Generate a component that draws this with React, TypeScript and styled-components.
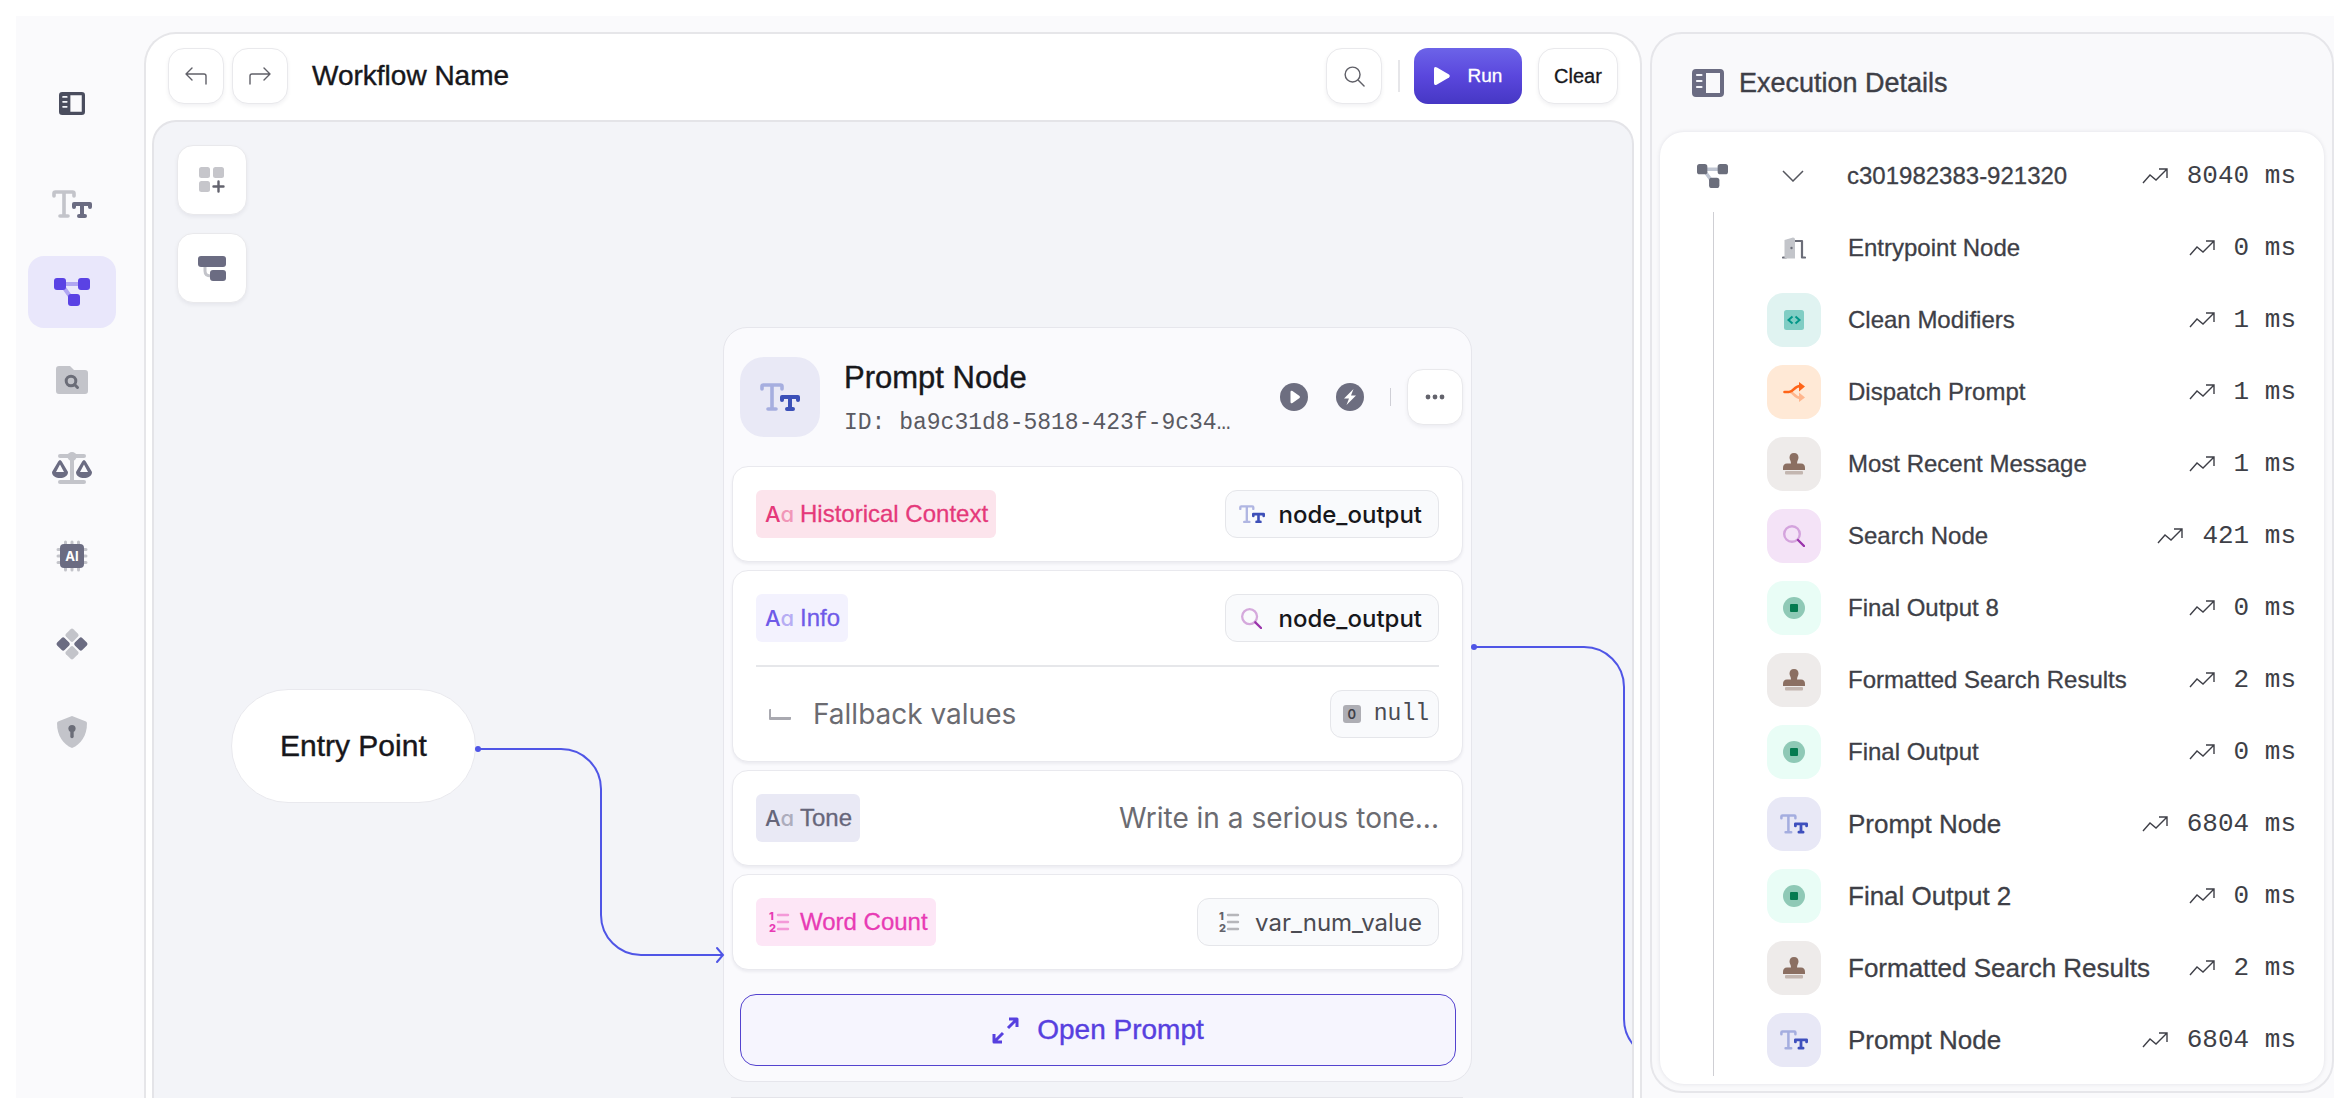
import React from "react";
import styled, { createGlobalStyle } from "styled-components";

const GROTESK = `"Liberation Sans", Arial, Helvetica, sans-serif`;
const INTER = `Inter, "Liberation Sans", sans-serif`;
const MONO = `"Liberation Mono", "Courier New", monospace`;

const Global = createGlobalStyle`
  *, *::before, *::after { box-sizing: border-box; }
  body { margin: 0; background: #fff; font-family: ${GROTESK}; color: #17171b; }
  button { font: inherit; color: inherit; cursor: pointer; margin: 0; padding: 0; }
  h1, h2, h3, p, ul { margin: 0; padding: 0; }
  ul { list-style: none; }
  svg { display: block; flex: none; }
`;

const Shell = styled.div`
  height: 100vh;
  overflow: hidden;
  padding: 16px 16px 0;
  background: #fff;
`;

const Frame = styled.div`
  display: flex;
  height: 100%;
  background: #fafafc;
`;

/* ---------- sidebar ---------- */

const Sidebar = styled.nav`
  flex: none;
  width: 128px;
  padding: 51px 12px 0;
  display: flex;
  flex-direction: column;
  gap: 16px;
`;

const NavButton = styled.button<{ $active?: boolean; $first?: boolean }>`
  width: 88px;
  height: 72px;
  margin-bottom: ${(p) => (p.$first ? 13 : 0)}px;
  border: 0;
  border-radius: 16px;
  display: flex;
  align-items: center;
  justify-content: center;
  background: ${(p) => (p.$active ? "#e9e7fb" : "transparent")};
`;

/* ---------- workflow panel ---------- */

const Workspace = styled.main`
  flex: 1;
  min-width: 0;
  margin: 16px 8px 0 0;
  display: flex;
  flex-direction: column;
  border: 2px solid #e6e6e9;
  border-bottom: 0;
  border-radius: 32px 32px 0 0;
  background: #fff;
`;

const Toolbar = styled.header`
  height: 86px;
  flex: none;
  display: flex;
  align-items: center;
  padding: 0 22px 2px;
`;

const Group = styled.div`
  display: flex;
  gap: 8px;
`;

const Heading = styled.h1`
  flex: 1;
  margin-left: 24px;
  font-size: 28px;
  line-height: 36px;
  font-weight: 400;
  -webkit-text-stroke: 0.4px currentColor;
`;

const ToolButton = styled.button<{ $size?: number }>`
  width: ${(p) => p.$size ?? 56}px;
  height: ${(p) => p.$size ?? 56}px;
  flex: none;
  display: flex;
  align-items: center;
  justify-content: center;
  border: 1px solid #e9e9ec;
  border-radius: 16px;
  background: #fff;
  box-shadow: 0 2px 4px rgba(20, 20, 50, 0.06);
`;

const Divider = styled.span<{ $tall?: boolean }>`
  width: ${(p) => (p.$tall ? 2 : 1)}px;
  height: ${(p) => (p.$tall ? 32 : 18)}px;
  margin: 0 14px 0 16px;
  background: ${(p) => (p.$tall ? "#e6e6e9" : "#cfcfd6")};
`;

const RunButton = styled.button`
  width: 108px;
  height: 56px;
  display: flex;
  align-items: center;
  justify-content: center;
  gap: 18px;
  border: 0;
  border-radius: 14px;
  font-size: 19px;
  color: #fff;
  background: linear-gradient(#6c63e8, #5a47dd 50%, #4637c4);
  -webkit-text-stroke: 0.3px currentColor;
`;

const ClearButton = styled(ToolButton)`
  width: 80px;
  margin-left: 16px;
  font-size: 20px;
  -webkit-text-stroke: 0.3px currentColor;
`;

const Canvas = styled.section`
  position: relative;
  flex: 1;
  min-height: 0;
  margin: 0 6px;
  overflow: hidden;
  border: 2px solid #e4e4e8;
  border-bottom: 0;
  border-radius: 24px 24px 0 0;
  background: #f3f4f8;
`;

const CanvasTools = styled.div`
  padding: 23px;
  display: flex;
  flex-direction: column;
  gap: 18px;
`;

const Edges = styled.svg`
  position: absolute;
  inset: 0;
  width: 100%;
  height: 100%;
  pointer-events: none;
`;

/* Nodes sit at free coordinates on the canvas. */
const EntryNode = styled.div`
  position: absolute;
  left: 77px;
  top: 567px;
  padding: 0 48px;
  height: 114px;
  display: flex;
  align-items: center;
  border: 1px solid #e9e9ee;
  border-radius: 57px;
  background: #fff;
  font-size: 30px;
  -webkit-text-stroke: 0.4px currentColor;
`;

const PromptNode = styled.article`
  position: absolute;
  left: 569px;
  top: 205px;
  width: 749px;
  padding: 0 8px 15px;
  border: 1px solid #e6e6ec;
  border-radius: 24px;
  background: #fafafd;
`;

const NextNode = styled.div`
  position: absolute;
  left: 577px;
  top: 975px;
  width: 732px;
  height: 60px;
  border-top: 2px solid #e4e4e9;
`;

const NodeHeader = styled.header`
  height: 138px;
  padding: 0 0 0 8px;
  display: flex;
  align-items: center;
`;

const NodeTile = styled.span`
  width: 80px;
  height: 80px;
  display: flex;
  align-items: center;
  justify-content: center;
  border-radius: 24px;
  background: #e9e9f6;
`;

const NodeTitles = styled.div`
  flex: 1;
  min-width: 0;
  margin-left: 24px;
  padding-top: 10px;
`;

const NodeTitle = styled.h2`
  font-size: 31px;
  line-height: 42px;
  font-weight: 400;
  -webkit-text-stroke: 0.4px currentColor;
`;

const NodeId = styled.p`
  font-family: ${MONO};
  font-size: 23px;
  line-height: 48px;
  color: #5a5a62;
`;

const RoundButton = styled.button`
  width: 28px;
  height: 28px;
  margin-left: 28px;
  border: 0;
  border-radius: 50%;
  background: #6d6e80;
`;

const HeaderRule = styled(Divider)`
  margin: 0 16px 0 26px;
`;

const Stack = styled.div`
  display: flex;
  flex-direction: column;
  gap: 8px;
`;

const Card = styled.div`
  padding: 0 23px;
  border: 1px solid #e9e9ee;
  border-radius: 16px;
  background: #fff;
  box-shadow: 0 2px 3px rgba(20, 20, 50, 0.06);
`;

const CardRow = styled.div<{ $ruled?: boolean }>`
  height: ${(p) => (p.$ruled ? 96 : 94)}px;
  display: flex;
  align-items: center;
  justify-content: space-between;
  border-top: ${(p) => (p.$ruled ? "2px solid #e6e7ea" : "0")};
`;

const Chip = styled.span<{ $bg: string; $fg: string }>`
  height: 48px;
  padding: 0 8px 0 9px;
  display: flex;
  align-items: center;
  gap: 8px;
  border-radius: 6px;
  font-size: 24px;
  color: ${(p) => p.$fg};
  background: ${(p) => p.$bg};
  -webkit-text-stroke: 0.3px currentColor;
`;

const IconCell = styled.span`
  width: 27px;
  display: flex;
  align-items: center;
  justify-content: center;
`;

const LetterIcon = styled.span`
  width: 27px;
  font-family: ${INTER};
  font-size: 22px;
  font-weight: 500;
  font-feature-settings: "cv11";
  -webkit-text-stroke: 0;
`;

const Faded = styled.span`
  opacity: 0.45;
`;

const Pill = styled.span<{ $soft?: boolean; $mono?: boolean }>`
  height: 48px;
  padding: ${(p) => (p.$mono ? "0 9px 0 12px" : "0 16px 0 12px")};
  display: flex;
  align-items: center;
  gap: 13px;
  border: 1px solid #e5e6ea;
  border-radius: 12px;
  background: #f9fafc;
  font-family: ${(p) => (p.$mono ? MONO : INTER)};
  font-size: ${(p) => (p.$mono ? 23 : 24)}px;
  font-weight: ${(p) => (p.$mono || p.$soft ? 400 : 500)};
  color: ${(p) => (p.$mono || p.$soft ? "#4b4b52" : "#17171b")};
`;

const VariablePill = styled(Pill)`
  padding-left: 17px;
`;

const ZeroBadge = styled.span`
  width: 18px;
  height: 18px;
  border-radius: 3px;
  background: #aeaeb4;
  color: #3f4048;
  font: 600 13px/18px ${INTER};
  text-align: center;
`;

const Muted = styled.span`
  display: flex;
  align-items: center;
  gap: 22px;
  font-family: ${INTER};
  font-size: 28px;
  color: #6b6b71;
`;

const Elbow = styled.i`
  width: 22px;
  height: 11px;
  margin-left: 13px;
  border: solid #a9a9b0;
  border-width: 0 0 3px 2px;
  border-radius: 1px;
`;

const OpenButton = styled.button`
  display: flex;
  align-items: center;
  justify-content: center;
  gap: 18px;
  width: calc(100% - 15px);
  height: 72px;
  margin: 24px 7px 0 8px;
  border: 1px solid #5443cf;
  border-radius: 16px;
  background: #f6f5fe;
  color: #5740df;
  font-size: 28px;
  -webkit-text-stroke: 0.4px currentColor;
`;

/* ---------- execution panel ---------- */

const Execution = styled.aside`
  flex: none;
  width: 684px;
  align-self: flex-start;
  margin-top: 16px;
  padding: 0 8px 7px;
  border: 2px solid #e6e6ea;
  border-radius: 32px;
  background: #f9f9fb;
`;

const ExecHeader = styled.header`
  height: 98px;
  padding: 0 0 0 32px;
  display: flex;
  align-items: center;
  gap: 15px;
  color: #3e3f47;
`;

const ExecTitle = styled.h2`
  font-size: 27px;
  line-height: 36px;
  font-weight: 400;
  -webkit-text-stroke: 0.4px currentColor;
`;

const ExecCard = styled.div`
  padding: 8px 28px 8px 37px;
  border-radius: 24px;
  background: #fff;
  box-shadow: 0 0 4px rgba(20, 20, 50, 0.1);
  color: #3e3f47;
`;

const Row = styled.div`
  height: 72px;
  display: flex;
  align-items: center;
`;

const Steps = styled.ul`
  margin-left: 16px;
  padding-left: 53px;
  border-left: 1px solid #cfcfd4;
`;

const Tile = styled.span<{ $bg?: string }>`
  width: 54px;
  height: 54px;
  display: flex;
  align-items: center;
  justify-content: center;
  border-radius: 16px;
  background: ${(p) => p.$bg ?? "transparent"};
`;

const Toggle = styled.button`
  width: 54px;
  height: 54px;
  margin-left: 38px;
  display: flex;
  align-items: center;
  justify-content: center;
  border: 0;
  background: none;
`;

const Label = styled.span<{ $large?: boolean }>`
  flex: 1;
  margin-left: 27px;
  white-space: nowrap;
  font-size: ${(p) => (p.$large ? 26 : 24)}px;
  line-height: 32px;
  -webkit-text-stroke: 0.3px currentColor;
`;

const Duration = styled.span`
  display: flex;
  align-items: center;
  gap: 19px;
  white-space: pre;
  font-family: ${MONO};
  font-size: 26px;
  line-height: 32px;
`;

/* ---------- icons ---------- */

const DARK = "#6b6c82";
const PALE = "#c3c4ca";

const PanelIcon = ({ w, h, color }: { w: number; h: number; color: string }) => (
  <svg width={w} height={h} viewBox="0 0 32 28" preserveAspectRatio="none" fill="none">
    <path fill={color} fillRule="evenodd" d="M4 0h24a4 4 0 0 1 4 4v20a4 4 0 0 1-4 4H4a4 4 0 0 1-4-4V4a4 4 0 0 1 4-4Zm10 4v20h14V4Z" />
    <path stroke="#f4f5fa" strokeWidth="2.2" strokeLinecap="round" d="M5 6h4.500M5 12h4.500M5 18h4.500" />
  </svg>
);

const TypeIcon = ({ w, a, b }: { w: number; a: string; b: string }) => (
  <svg width={w} height={(w * 28) / 40} viewBox="0 0 40 28" fill="none" strokeLinecap="round" strokeLinejoin="round">
    <path stroke={a} strokeWidth="3.600" d="M2 6V3.500Q2 2 3.500 2h17Q22 2 22 3.500V6M12 2v24M8 26h8" />
    <path stroke={b} strokeWidth="4" d="M22 17v-3h16v3M30 14v12M27 26h6" />
  </svg>
);

const NodesIcon = ({ w, color, link }: { w: number; color: string; link: string }) => (
  <svg width={w} height={(w * 28) / 36} viewBox="0 0 36 28" fill="none">
    <path stroke={link} strokeWidth="4" d="M8 6h18M8 7l10 14" />
    <g fill={color}>
      <rect width="12" height="12" rx="3" />
      <rect x="24" width="12" height="12" rx="3" />
      <rect x="14" y="16" width="12" height="12" rx="3" />
    </g>
  </svg>
);

const FolderIcon = () => (
  <svg width="32" height="28" viewBox="0 0 32 28" fill="none">
    <path fill={PALE} d="M3 0h11l4 4h11a3 3 0 0 1 3 3v18a3 3 0 0 1-3 3H3a3 3 0 0 1-3-3V3a3 3 0 0 1 3-3Z" />
    <circle cx="15" cy="15" r="4.800" stroke="#6b6d78" strokeWidth="3" />
    <path stroke="#6b6d78" strokeWidth="3" strokeLinecap="round" d="m18.500 18.500 3 3" />
  </svg>
);

const ScaleIcon = () => (
  <svg width="40" height="32" viewBox="0 0 40 32" fill="none">
    <path stroke={PALE} strokeWidth="4" strokeLinecap="round" d="M8 4h24M20 4v26M8 30h24" />
    <circle cx="20" cy="4.500" r="4.500" fill={PALE} />
    <g fill={DARK} fillRule="evenodd">
      <path d="M6.200 9.500q1.800-3 3.600 0L16 20c0 8-16 8-16 0ZM4 20h8L8 12.500Z" />
      <path d="M30.200 9.500q1.800-3 3.600 0L40 20c0 8-16 8-16 0ZM28 20h8l-4-7.500Z" />
    </g>
  </svg>
);

const ChipIcon = () => (
  <svg width="32" height="32" viewBox="0 0 32 32" fill="none">
    <path stroke={PALE} strokeWidth="3" strokeLinecap="round" d="M9.500 2v28M16 2v28M22.500 2v28M2 9.500h28M2 16h28M2 22.500h28" />
    <rect x="4" y="4" width="24" height="24" rx="4" fill={DARK} />
    <text x="16" y="21" textAnchor="middle" fontFamily="Inter, sans-serif" fontWeight="700" fontSize="13" fill="#fff">AI</text>
  </svg>
);

const DiamondsIcon = () => (
  <svg width="34" height="34" viewBox="0 0 34 34">
    <g transform="rotate(45 17 17)">
      <rect x="5.500" y="5.500" width="10.500" height="10.500" rx="2" fill={PALE} />
      <rect x="18" y="18" width="10.500" height="10.500" rx="2" fill={PALE} />
      <rect x="18" y="5.500" width="10.500" height="10.500" rx="2" fill={DARK} />
      <rect x="5.500" y="18" width="10.500" height="10.500" rx="2" fill={DARK} />
    </g>
  </svg>
);

const ShieldIcon = () => (
  <svg width="30" height="32" viewBox="0 0 30 32" fill="none">
    <path fill={PALE} d="M15 0 29 5.500q1 .5 1 2C30 19 24 28.500 15 32 6 28.500 0 19 0 7.500q0-1.500 1-2Z" />
    <circle cx="15" cy="12.500" r="3.600" fill="#6b6d78" />
    <path stroke="#6b6d78" strokeWidth="3.400" strokeLinecap="round" d="M15 13v7.500" />
  </svg>
);

const BackIcon = ({ flip }: { flip?: boolean }) => (
  <svg width="22" height="18" viewBox="0 0 22 18" fill="none" stroke="#606068" strokeWidth="1.400" strokeLinecap="round" strokeLinejoin="round">
    <path d={flip ? "M1 17V9q0-2 2-2h18M15 1l6 6-6 6" : "M21 17V9q0-2-2-2H1M7 1 1 7l6 6"} />
  </svg>
);

const SearchIcon = ({ size, ring, handle, weight }: { size: number; ring: string; handle: string; weight: number }) => (
  <svg width={size} height={size} viewBox="0 0 22 22" fill="none" strokeLinecap="round" strokeWidth={weight}>
    <circle cx="9" cy="9" r="7.800" stroke={ring} />
    <path stroke={handle} d="m15 15 6 6" />
  </svg>
);

const AddBlockIcon = () => (
  <svg width="26" height="26" viewBox="0 0 26 26" fill="none">
    <g fill="#c6c6cb">
      <rect width="11" height="11" rx="2.500" />
      <rect x="14" width="11" height="11" rx="2.500" />
      <rect y="14" width="11" height="11" rx="2.500" />
    </g>
    <path stroke="#63636e" strokeWidth="2.400" strokeLinecap="round" d="M19.500 14.500v10M14.500 19.500h10" />
  </svg>
);

const ArrangeIcon = () => (
  <svg width="28" height="25" viewBox="0 0 28 25" fill="none">
    <path stroke={PALE} strokeWidth="3" d="M7 10v5q0 5 6 5" />
    <rect width="28" height="11" rx="3" fill={DARK} />
    <rect x="12" y="14" width="16" height="11" rx="3" fill={DARK} />
  </svg>
);

const NumberedIcon = ({ color }: { color: string }) => (
  <svg width="22" height="22" viewBox="0 0 22 22" fill={color} overflow="visible">
    <g fontFamily="Inter, sans-serif" fontSize="11" fontWeight="800">
      <text x="1" y="9">1</text>
      <text x="1" y="21">2</text>
    </g>
    <path stroke={color} strokeOpacity=".45" strokeWidth="2.400" strokeLinecap="round" d="M10 4h10M10 11h10M10 18h10" />
  </svg>
);

const ExpandIcon = () => (
  <svg width="27" height="27" viewBox="0 0 27 27" fill="none" stroke="currentColor" strokeWidth="3" strokeLinejoin="round">
    <path d="m16 11 9-9M17 2h8v8M11 16l-9 9M2 17v8h8" />
  </svg>
);

const TrendIcon = () => (
  <svg width="26" height="16" viewBox="0 0 26 16" fill="none" stroke="#3e3f47" strokeWidth="1.400">
    <path d="m1 15 7-8 6 5L25 1M17 1h8v9" />
  </svg>
);

const DoorIcon = () => (
  <svg width="24" height="22" viewBox="0 0 24 22" fill="none">
    <path stroke="#6b6d78" strokeWidth="2.200" strokeLinecap="round" strokeLinejoin="round" d="M13 4h7v16.500h3M1 20.500h3" />
    <path fill="#c3c5ca" d="M2.500 3 11 .5q2 0 2 2V21.500H2.500Z" />
    <circle cx="9.500" cy="11" r="1.200" fill="#6b6d78" />
  </svg>
);

const CodeIcon = () => (
  <svg width="20" height="20" viewBox="0 0 20 20" fill="none">
    <rect width="20" height="20" rx="2.500" fill="#80cdc4" />
    <path stroke="#009688" strokeWidth="2" d="m8.500 6.500-4 3.500 4 3.500M11.500 6.500l4 3.500-4 3.500" />
  </svg>
);

const SplitIcon = () => (
  <svg width="22" height="20" viewBox="0 0 22 20" fill="none">
    <path stroke="#ffb68d" strokeWidth="2.600" d="M7 10c4 0 4 6 11 6" />
    <path fill="#ffb68d" d="m16 10.500 6 5-6 4.500Z" />
    <path stroke="#ff6418" strokeWidth="2.600" strokeLinecap="round" d="M1.500 10H6c5 0 5-6 11-6" />
    <path fill="#ff6418" d="m16 0 6 4.500-6 5Z" />
  </svg>
);

const StampIcon = () => (
  <svg width="22" height="22" viewBox="0 0 22 22">
    <path fill="#8b6f62" d="M11 0c3 0 4.500 2 4.500 4.500 0 2.500-1.500 3-1.500 6h4q4 0 4 4.500v2H0v-2q0-4.500 4-4.500h4c0-3-1.500-3.500-1.500-6C6.500 2 8 0 11 0Z" />
    <rect x="2" y="18" width="18" height="3.500" rx="1" fill="#c3b6b0" />
  </svg>
);

const StopIcon = () => (
  <svg width="22" height="22" viewBox="0 0 22 22">
    <circle cx="11" cy="11" r="11" fill="#8fc9b6" />
    <rect x="7" y="7" width="8" height="8" rx="1" fill="#067a50" />
  </svg>
);

/* ---------- data ---------- */

type Kind = "entry" | "code" | "split" | "stamp" | "search" | "stop" | "prompt";

const kinds: Record<Kind, { bg?: string; icon: React.ReactNode }> = {
  entry: { icon: <DoorIcon /> },
  code: { bg: "#e0f3f1", icon: <CodeIcon /> },
  split: { bg: "#ffe9d6", icon: <SplitIcon /> },
  stamp: { bg: "#eeebea", icon: <StampIcon /> },
  search: { bg: "#f4e3f7", icon: <SearchIcon size={22} ring="#d4a3dd" handle="#9a34ac" weight={2.4} /> },
  stop: { bg: "#e9fdf6", icon: <StopIcon /> },
  prompt: { bg: "#e8e8f6", icon: <TypeIcon w={28} a="#a4addf" b="#3e4fbd" /> },
};

const steps: { kind: Kind; name: string; ms: number; large?: boolean }[] = [
  { kind: "entry", name: "Entrypoint Node", ms: 0 },
  { kind: "code", name: "Clean Modifiers", ms: 1 },
  { kind: "split", name: "Dispatch Prompt", ms: 1 },
  { kind: "stamp", name: "Most Recent Message", ms: 1 },
  { kind: "search", name: "Search Node", ms: 421 },
  { kind: "stop", name: "Final Output 8", ms: 0 },
  { kind: "stamp", name: "Formatted Search Results", ms: 2 },
  { kind: "stop", name: "Final Output", ms: 0 },
  { kind: "prompt", name: "Prompt Node", ms: 6804, large: true },
  { kind: "stop", name: "Final Output 2", ms: 0, large: true },
  { kind: "stamp", name: "Formatted Search Results", ms: 2, large: true },
  { kind: "prompt", name: "Prompt Node", ms: 6804, large: true },
];

const nav: { label: string; icon: React.ReactNode; active?: boolean }[] = [
  { label: "Toggle sidebar", icon: <PanelIcon w={26} h={23} color="#4a4d5e" /> },
  { label: "Prompts", icon: <TypeIcon w={40} a={PALE} b={DARK} /> },
  { label: "Workflows", icon: <NodesIcon w={36} color="#5a42e4" link="#b0a6f2" />, active: true },
  { label: "Documents", icon: <FolderIcon /> },
  { label: "Evaluations", icon: <ScaleIcon /> },
  { label: "Models", icon: <ChipIcon /> },
  { label: "Deployments", icon: <DiamondsIcon /> },
  { label: "Security", icon: <ShieldIcon /> },
];

const Time = ({ ms }: { ms: number }) => (
  <Duration>
    <TrendIcon />
    <span>{ms} ms</span>
  </Duration>
);

const TextChip = ({ name, bg, fg }: { name: string; bg: string; fg: string }) => (
  <Chip $bg={bg} $fg={fg}>
    <LetterIcon aria-hidden>
      A<Faded>a</Faded>
    </LetterIcon>
    {name}
  </Chip>
);

export default function App() {
  return (
    <Shell>
      <Global />
      <Frame>
        <Sidebar aria-label="Main">
          {nav.map((item, i) => (
            <NavButton key={item.label} aria-label={item.label} $active={item.active} $first={i === 0}>
              {item.icon}
            </NavButton>
          ))}
        </Sidebar>

        <Workspace>
          <Toolbar>
            <Group>
              <ToolButton aria-label="Undo"><BackIcon /></ToolButton>
              <ToolButton aria-label="Redo"><BackIcon flip /></ToolButton>
            </Group>
            <Heading>Workflow Name</Heading>
            <ToolButton aria-label="Search">
              <SearchIcon size={21} ring="#606068" handle="#606068" weight={1.5} />
            </ToolButton>
            <Divider $tall />
            <RunButton>
              <svg width="16" height="18" viewBox="0 0 16 18" fill="#fff">
                <path d="M0 2q0-3 3-1.500l12 7q1.500 1.500 0 3l-12 7Q0 19 0 16Z" />
              </svg>
              Run
            </RunButton>
            <ClearButton>Clear</ClearButton>
          </Toolbar>

          <Canvas>
            <CanvasTools>
              <ToolButton $size={70} aria-label="Add node"><AddBlockIcon /></ToolButton>
              <ToolButton $size={70} aria-label="Auto layout"><ArrangeIcon /></ToolButton>
            </CanvasTools>

            <EntryNode>Entry Point</EntryNode>

            <PromptNode>
              <NodeHeader>
                <NodeTile><TypeIcon w={40} a="#a6aedf" b="#3b50b8" /></NodeTile>
                <NodeTitles>
                  <NodeTitle>Prompt Node</NodeTitle>
                  <NodeId>ID: ba9c31d8-5818-423f-9c34…</NodeId>
                </NodeTitles>
                <RoundButton aria-label="Run node">
                  <svg width="28" height="28" viewBox="0 0 28 28" fill="#fff"><path d="M10.500 9q0-2 2-1l7 5q1 1 0 2l-7 5q-2 1-2-1Z" /></svg>
                </RoundButton>
                <RoundButton aria-label="Trigger">
                  <svg width="28" height="28" viewBox="0 0 28 28" fill="#fff"><path d="M17.500 6 8 15.500h5L10.500 22 20 12.500h-5Z" /></svg>
                </RoundButton>
                <HeaderRule />
                <ToolButton aria-label="More options">
                  <svg width="20" height="6" viewBox="0 0 20 6" fill="#63636c">
                    <circle cx="3" cy="3" r="2.400" /><circle cx="10" cy="3" r="2.400" /><circle cx="17" cy="3" r="2.400" />
                  </svg>
                </ToolButton>
              </NodeHeader>

              <Stack>
                <Card>
                  <CardRow>
                    <TextChip name="Historical Context" bg="#fce4ec" fg="#e5397a" />
                    <Pill><IconCell><TypeIcon w={26} a="#b0b6e2" b="#3e50b8" /></IconCell>node_output</Pill>
                  </CardRow>
                </Card>
                <Card>
                  <CardRow>
                    <TextChip name="Info" bg="#f3f2fe" fg="#6f5be8" />
                    <Pill>
                      <IconCell><SearchIcon size={21} ring="#d5a9dc" handle="#9a34ac" weight={2.4} /></IconCell>
                      node_output
                    </Pill>
                  </CardRow>
                  <CardRow $ruled>
                    <Muted><Elbow />Fallback values</Muted>
                    <Pill $mono><ZeroBadge>0</ZeroBadge>null</Pill>
                  </CardRow>
                </Card>
                <Card>
                  <CardRow>
                    <TextChip name="Tone" bg="#e9e9f5" fg="#66667a" />
                    <Muted>Write in a serious tone...</Muted>
                  </CardRow>
                </Card>
                <Card>
                  <CardRow>
                    <Chip $bg="#fde6f6" $fg="#e83bb4">
                      <IconCell><NumberedIcon color="#e83bb4" /></IconCell>
                      Word Count
                    </Chip>
                    <VariablePill $soft>
                      <IconCell><NumberedIcon color="#63636b" /></IconCell>
                      var_num_value
                    </VariablePill>
                  </CardRow>
                </Card>
              </Stack>

              <OpenButton><ExpandIcon />Open Prompt</OpenButton>
            </PromptNode>

            <NextNode />

            <Edges fill="none" stroke="#4f55e6" strokeWidth="2">
              <circle cx="324" cy="627" r="3" fill="#4f55e6" stroke="none" />
              <path d="M324 627h83a40 40 0 0 1 40 40v126a40 40 0 0 0 40 40h82" />
              <path d="m563 826 6 7-6 7" strokeLinecap="round" />
              <circle cx="1320" cy="525" r="3" fill="#4f55e6" stroke="none" />
              <path d="M1320 525h110a40 40 0 0 1 40 40v332a40 40 0 0 0 40 40" />
            </Edges>
          </Canvas>
        </Workspace>

        <Execution>
          <ExecHeader>
            <PanelIcon w={32} h={28} color={DARK} />
            <ExecTitle>Execution Details</ExecTitle>
          </ExecHeader>
          <ExecCard>
            <Row>
              <NodesIcon w={31} color="#6b6e7c" link="#bfc5d2" />
              <Toggle aria-label="Collapse run" aria-expanded>
                <svg width="22" height="12" viewBox="0 0 22 12" fill="none" stroke="#55565e" strokeWidth="1.500"><path d="m1 1 10 10L21 1" /></svg>
              </Toggle>
              <Label>c301982383-921320</Label>
              <Time ms={8040} />
            </Row>
            <Steps>
              {steps.map((s, i) => (
                <li key={i}>
                  <Row>
                    <Tile $bg={kinds[s.kind].bg}>{kinds[s.kind].icon}</Tile>
                    <Label $large={s.large}>{s.name}</Label>
                    <Time ms={s.ms} />
                  </Row>
                </li>
              ))}
            </Steps>
          </ExecCard>
        </Execution>
      </Frame>
    </Shell>
  );
}
